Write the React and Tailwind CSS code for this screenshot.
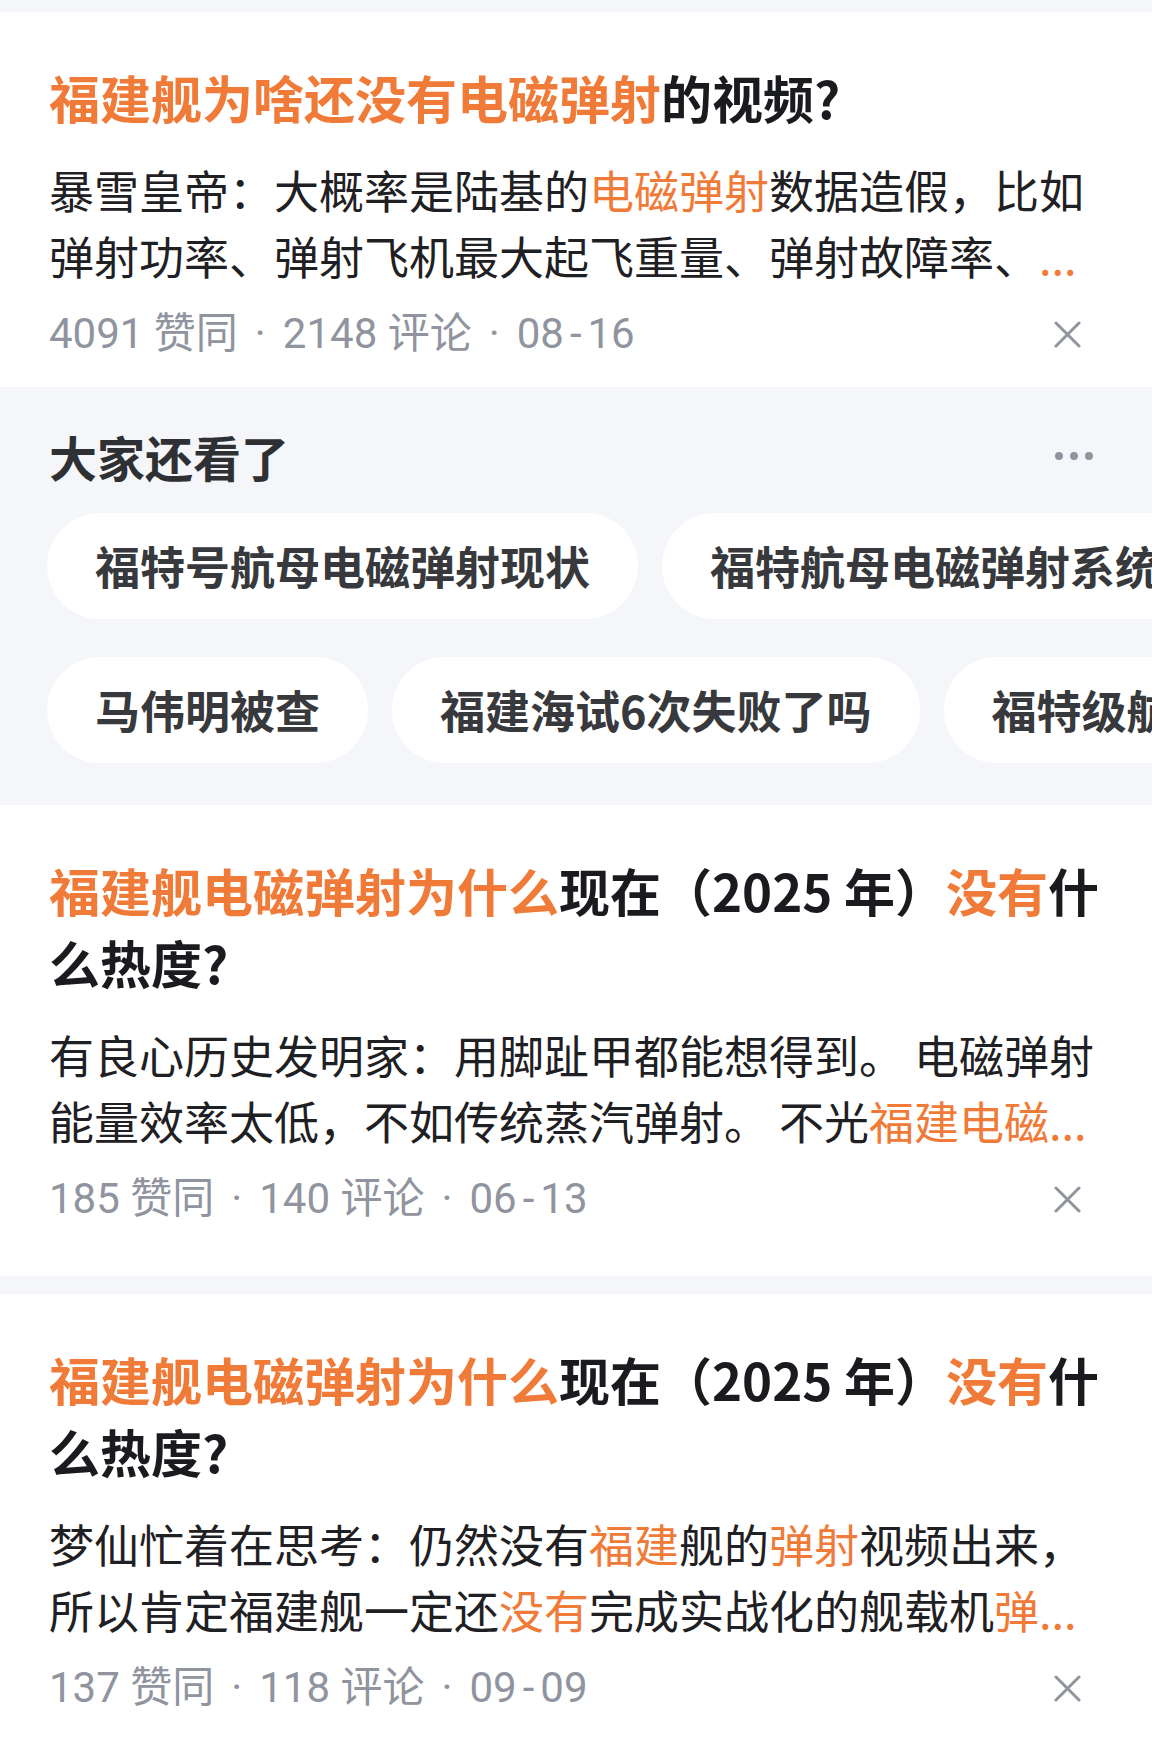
import React from 'react';

const cjk = "font-['Noto_Sans_CJK_SC','Noto_Sans',sans-serif]";

function Hl({ children }) {
  return <span className="text-[#f07a37]">{children}</span>;
}

function CloseIcon() {
  return (
    <svg width="27" height="27" viewBox="0 0 27 27" fill="none" stroke="#8f949e" strokeWidth="3" strokeLinecap="round">
      <path d="M2 2L25 25M25 2L2 25" />
    </svg>
  );
}

function Meta({ likes, comments, date }) {
  const [m, d] = date.split('-');
  return (
    <div className="mt-5 flex items-center justify-between">
      <div className="font-['Roboto','Noto_Sans_CJK_SC',sans-serif] text-[42px] leading-[50px] text-[#8f949e] whitespace-nowrap">
        <span>{likes} 赞同</span>
        <span className="mx-[17px]">·</span>
        <span>{comments} 评论</span>
        <span className="mx-[17px]">·</span>
        <span>{m}<span className="mx-[6px]">-</span>{d}</span>
      </div>
      <div className="mr-[22px] flex items-center">
        <CloseIcon />
      </div>
    </div>
  );
}

function AnswerCard({ title, body, meta, className }) {
  return (
    <div className={`bg-white px-[49px] pt-[49px] ${className}`}>
      <h2 className="text-[51px] leading-[72px] font-bold text-[#1a1b1f]">{title}</h2>
      <p className="mt-6 text-[45px] leading-[66px] text-[#1f2023]">{body}</p>
      <Meta {...meta} />
    </div>
  );
}

function Pill({ children }) {
  return (
    <div className="shrink-0 h-[106px] rounded-full bg-white px-[48px] flex items-center whitespace-nowrap text-[45px] font-bold text-[#37393d]">
      {children}
    </div>
  );
}

function AlsoViewed() {
  return (
    <div className="bg-[#f5f6f9] pt-[39px] pb-[42px] overflow-hidden">
      <div className="px-[49px] flex items-center justify-between h-[60px]">
        <h3 className="text-[48px] font-bold text-[#2e3034]">大家还看了</h3>
        <div className="mr-[10px] flex items-center gap-[7px]">
          <span className="w-[8px] h-[8px] rounded-full bg-[#8f949e]" />
          <span className="w-[8px] h-[8px] rounded-full bg-[#8f949e]" />
          <span className="w-[8px] h-[8px] rounded-full bg-[#8f949e]" />
        </div>
      </div>
      <div className="mt-[27px] pl-[47px] flex gap-[24px] overflow-hidden">
        <Pill>福特号航母电磁弹射现状</Pill>
        <Pill>福特航母电磁弹射系统</Pill>
      </div>
      <div className="mt-[38px] pl-[47px] flex gap-[24px] overflow-hidden">
        <Pill>马伟明被查</Pill>
        <Pill>福建海试6次失败了吗</Pill>
        <Pill>福特级航母</Pill>
      </div>
    </div>
  );
}

export default function App() {
  return (
    <div className={`w-full bg-[#f5f6f9] pt-[12px] ${cjk}`}>
      <AnswerCard
        className="pb-[28px]"
        title={<><Hl>福建舰为啥还没有电磁弹射</Hl>的视频?</>}
        body={<>暴雪皇帝：大概率是陆基的<Hl>电磁弹射</Hl>数据造假，比如弹射功率、弹射飞机最大起飞重量、弹射故障率、<Hl>...</Hl></>}
        meta={{ likes: '4091', comments: '2148', date: '08-16' }}
      />
      <AlsoViewed />
      <AnswerCard
        className="pb-[52px]"
        title={<><Hl>福建舰电磁弹射为什么</Hl>现在（2025 年）<Hl>没有</Hl>什么热度?</>}
        body={<>有良心历史发明家：用脚趾甲都能想得到。 电磁弹射能量效率太低，不如传统蒸汽弹射。 不光<Hl>福建电磁...</Hl></>}
        meta={{ likes: '185', comments: '140', date: '06-13' }}
      />
      <AnswerCard
        className="mt-[18px] pb-[48px]"
        title={<><Hl>福建舰电磁弹射为什么</Hl>现在（2025 年）<Hl>没有</Hl>什么热度?</>}
        body={<>梦仙忙着在思考：仍然没有<Hl>福建</Hl>舰的<Hl>弹射</Hl>视频出来，所以肯定福建舰一定还<Hl>没有</Hl>完成实战化的舰载机<Hl>弹...</Hl></>}
        meta={{ likes: '137', comments: '118', date: '09-09' }}
      />
    </div>
  );
}
